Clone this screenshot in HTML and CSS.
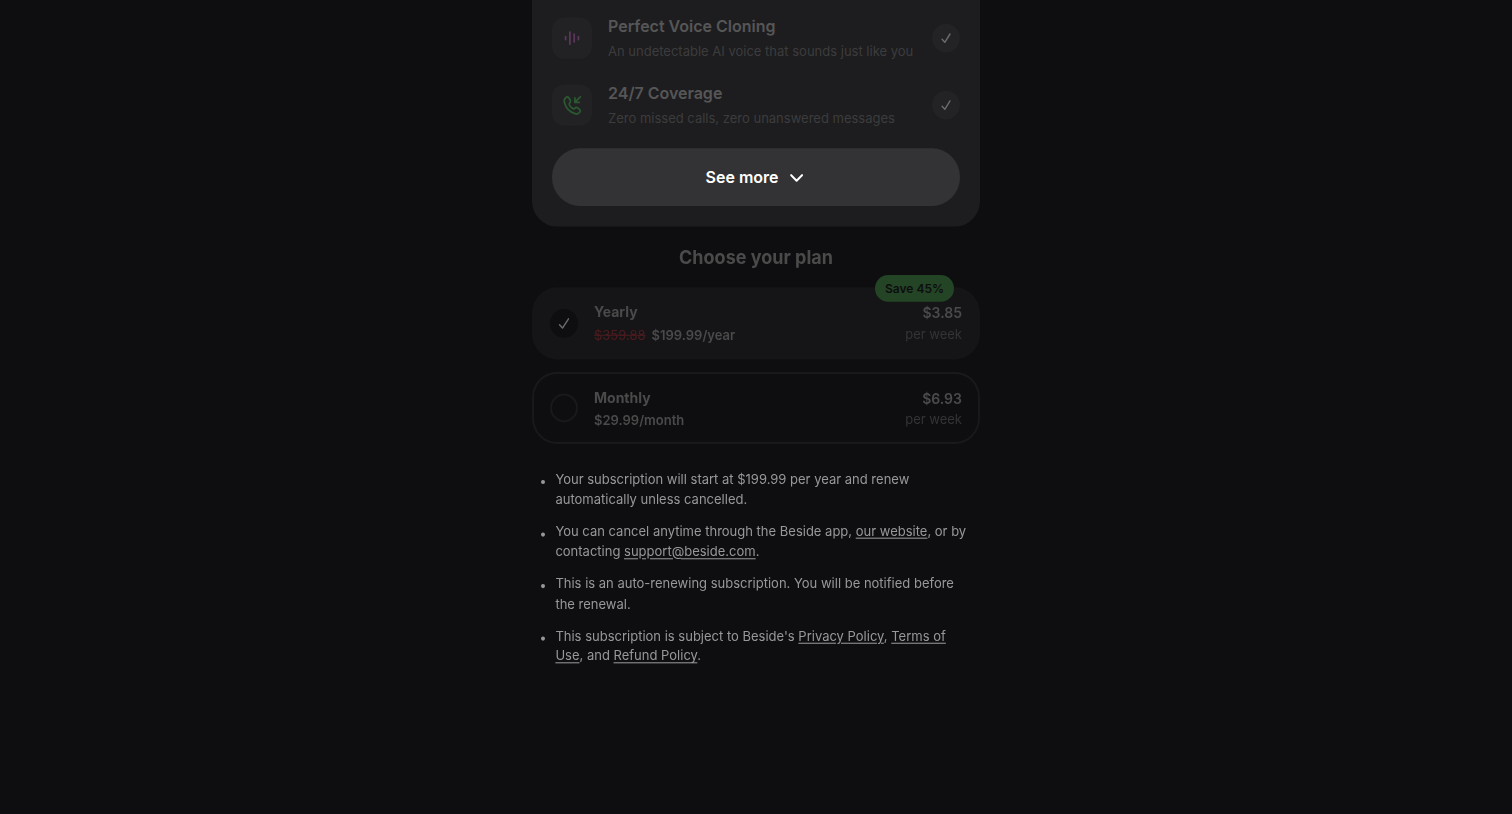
FILE: index.html
```html
<!DOCTYPE html>
<html lang="en">
<head>
<meta charset="utf-8">
<title>Choose your plan</title>
<link rel="stylesheet" href="styles.css">
</head>
<body>
<main class="page">
  <section class="features">
    <div class="feature">
      <div class="tile">
        <svg width="20" height="20" viewBox="0 0 20 20" fill="none" stroke="#5a375a" stroke-width="1.8" stroke-linecap="round"><path d="M3.600 8.700v2.600M7.900 4.200v11.600M12.200 6.300v7.200M16.400 8.700v2.600"/></svg>
      </div>
      <div class="feature-text">
        <h3 class="feature-title">Perfect Voice Cloning</h3>
        <p class="feature-sub">An undetectable AI voice that sounds just like you</p>
      </div>
      <div class="check"><svg width="12" height="14" viewBox="0 0 12 14" fill="none" stroke="#6c6c6d" stroke-width="1.400" stroke-linecap="round" stroke-linejoin="round"><path d="M2.100 8.200l2.700 2.900L10 3"/></svg></div>
    </div>
    <div class="feature">
      <div class="tile">
        <svg width="20" height="20" viewBox="0 0 20 20" fill="none" stroke="#2a5830" stroke-width="1.800" stroke-linecap="round" stroke-linejoin="round"><path d="M18.300 2L12.900 7.400M12.900 3.100v4.300h4.300"/><path transform="translate(.7 0) scale(.97 1)" d="M3.400 2.600c1.100-.8 2.300-.6 3 .5l1.400 2.100c.5.800.4 1.600-.2 2.300l-.6.700c-.4.500-.4 1-.1 1.600.9 1.600 2.100 2.800 3.700 3.700.6.300 1.100.3 1.600-.1l.7-.6c.7-.6 1.500-.7 2.300-.2l2 1.400c1 .7 1.200 1.900.4 3-1.200 1.500-3 2-4.900 1.400C7 16.700 3.200 12.900 1.700 7.300c-.5-1.900.2-3.600 1.700-4.700z"/></svg>
      </div>
      <div class="feature-text">
        <h3 class="feature-title">24/7 Coverage</h3>
        <p class="feature-sub">Zero missed calls, zero unanswered messages</p>
      </div>
      <div class="check"><svg width="12" height="14" viewBox="0 0 12 14" fill="none" stroke="#6c6c6d" stroke-width="1.400" stroke-linecap="round" stroke-linejoin="round"><path d="M2.100 8.200l2.700 2.900L10 3"/></svg></div>
    </div>
    <button class="more"><span>See more</span><svg width="16" height="9" viewBox="0 0 16 9" fill="none" stroke="#fff" stroke-width="2" stroke-linecap="round" stroke-linejoin="round"><path d="M1.200 2.100l5.400 5.300L12 2.100"/></svg></button>
  </section>

  <h2 class="heading">Choose your plan</h2>

  <section class="plan plan-selected">
    <span class="badge">Save 45%</span>
    <div class="radio radio-on"><svg width="12" height="14" viewBox="0 0 12 14" fill="none" stroke="#6c6c6d" stroke-width="1.400" stroke-linecap="round" stroke-linejoin="round"><path d="M1.500 8.300l3 3.200L10.500 2.500"/></svg></div>
    <div class="plan-info">
      <div class="plan-name">Yearly</div>
      <div class="plan-price"><s class="old">$359.88</s><span>$199.99/year</span></div>
    </div>
    <div class="plan-week"><div class="amount">$3.85</div><div class="per">per week</div></div>
  </section>

  <section class="plan plan-outline">
    <div class="radio"></div>
    <div class="plan-info">
      <div class="plan-name">Monthly</div>
      <div class="plan-price"><span>$29.99/month</span></div>
    </div>
    <div class="plan-week"><div class="amount">$6.93</div><div class="per">per week</div></div>
  </section>

  <ul class="terms">
    <li>Your subscription will start at $199.99 per year and renew<br>automatically unless cancelled.</li>
    <li>You can cancel anytime through the Beside app, <a>our website</a>, or by<br>contacting <a>support@beside.com</a>.</li>
    <li>This is an auto-renewing subscription. You will be notified before<br>the renewal.</li>
    <li>This subscription is subject to Beside's <a>Privacy Policy</a>, <a>Terms of<br>Use</a>, and <a>Refund Policy</a>.</li>
  </ul>
</main>
</body>
</html>
```
FILE: styles.css
```css
* { box-sizing: border-box; margin: 0; padding: 0; }
body { background: #0e0e10; font-family: Inter, "Liberation Sans", sans-serif; height: 814px; overflow: hidden; }
.page { width: 448px; margin: 0 auto; transform: scaleY(1.03); transform-origin: top; }
.features { height: 219.900px; padding: 11.700px 20px 20px; background: #1d1d1f; border-radius: 0 0 25px 25px; }
.feature { display: flex; align-items: center; height: 50px; margin-bottom: 15.300px; }
.feature + .feature { margin-bottom: 17.500px; }
.tile { display: flex; align-items: center; justify-content: center; width: 40px; height: 40.200px; border-radius: 12px; background: #222224; }
.feature-text { flex: 1; padding: 0 0 1.500px 16px; white-space: nowrap; }
.feature-title { font-size: 16px; line-height: 24px; font-weight: 600; color: #565657; }
.feature-sub { font-size: 13px; line-height: 20px; margin-top: 2px; color: #3c3c3d; }
.check { display: flex; align-items: center; justify-content: center; width: 28px; height: 28px; border-radius: 50%; background: #232325; }
.more { display: flex; align-items: center; justify-content: center; gap: 12px; width: 100%; height: 55.500px; border: 0; border-radius: 28px; background: #333335; color: #fff; font: 600 16px/24px Inter, sans-serif; }
.heading { margin-top: 17.500px; height: 41.500px; font-size: 18px; line-height: 25px; font-weight: 700; text-align: center; color: #4a4a4b; }
.plan { position: relative; display: flex; align-items: center; height: 69.900px; padding: 0 18px; border-radius: 25px; }
.plan-selected { background: #151517; }
.plan-outline { margin-top: 12.500px; border: 2px solid #19191b; padding: 0 16px; height: 69.500px; }
.badge { position: absolute; right: 26px; top: -12px; width: 79px; height: 26px; border-radius: 13px; background: #234425; color: #0e0e10; font-size: 12px; line-height: 25px; font-weight: 600; text-align: center; }
.radio { display: flex; align-items: center; justify-content: center; width: 28px; height: 28px; border-radius: 50%; border: 2px solid #19191b; }
.radio-on { border: 0; background: #0e0e10; }
.plan-info { flex: 1; padding-left: 16px; font-weight: 600; color: #4a4a4b; }
.plan-name { font-size: 14px; line-height: 23px; font-weight: 700; }
.plan-price { display: flex; gap: 6px; font-size: 13px; line-height: 22px; }
.old { color: #4e1c1f; font-weight: 400; }
.plan-week { padding-top: 1px; text-align: right; }
.amount { font-size: 14px; line-height: 21px; font-weight: 600; color: #4a4a4b; }
.per { font-size: 13px; line-height: 21px; color: #343436; }
.terms { list-style: none; padding: 24.800px 0 0 23.400px; font-size: 13px; line-height: 19.500px; color: #98989a; white-space: nowrap; }
.terms li { position: relative; margin-bottom: 11.800px; }
.terms li::before { content: ""; position: absolute; left: -14px; top: 10.200px; width: 4px; height: 4px; border-radius: 50%; background: #98989a; }
.terms a { text-decoration: underline; text-underline-offset: 1.500px; }
```
